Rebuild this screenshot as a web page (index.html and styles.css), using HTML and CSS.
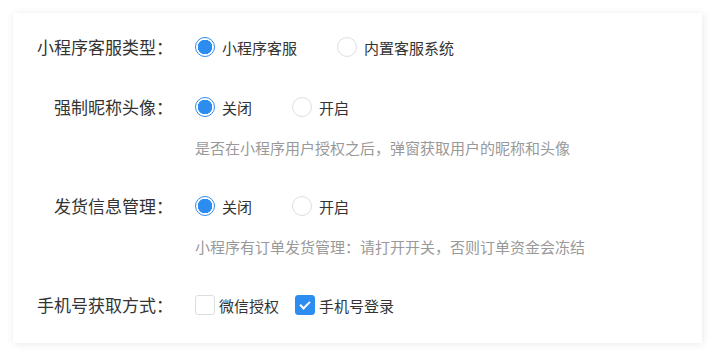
FILE: index.html
```html
<!DOCTYPE html>
<html lang="zh-CN">
<head>
    <meta charset="UTF-8">
    <meta name="viewport" content="width=device-width, initial-scale=1.0">
    <title>小程序设置</title>
    <link rel="stylesheet" href="styles.css">
</head>
<body>
    <div class="setting-card">
        <div class="form-item">
            <label class="form-label">小程序客服类型：</label>
            <div class="form-content">
                <div class="radio-group">
                    <span class="radio checked"><span class="radio-inner"></span>小程序客服</span>
                    <span class="radio"><span class="radio-inner"></span>内置客服系统</span>
                </div>
            </div>
        </div>

        <div class="form-item">
            <label class="form-label">强制昵称头像：</label>
            <div class="form-content">
                <div class="radio-group">
                    <span class="radio checked"><span class="radio-inner"></span>关闭</span>
                    <span class="radio"><span class="radio-inner"></span>开启</span>
                </div>
                <div class="help">是否在小程序用户授权之后，弹窗获取用户的昵称和头像</div>
            </div>
        </div>

        <div class="form-item">
            <label class="form-label">发货信息管理：</label>
            <div class="form-content">
                <div class="radio-group">
                    <span class="radio checked"><span class="radio-inner"></span>关闭</span>
                    <span class="radio"><span class="radio-inner"></span>开启</span>
                </div>
                <div class="help">小程序有订单发货管理：请打开开关，否则订单资金会冻结</div>
            </div>
        </div>

        <div class="form-item">
            <label class="form-label">手机号获取方式：</label>
            <div class="form-content">
                <div class="checkbox-group">
                    <span class="checkbox"><span class="checkbox-inner"></span>微信授权</span>
                    <span class="checkbox checked"><span class="checkbox-inner"></span>手机号登录</span>
                </div>
            </div>
        </div>
    </div>
</body>
</html>
```

FILE: styles.css
```css
body {
    margin: 0;
    padding: 13px;
    background: #fff;
    font-family: "Noto Sans CJK SC", "Noto Sans", sans-serif;
    color: #333;
}
.setting-card {
    background: white;
    padding: 17px 0 21px;
    box-shadow: 1px 1px 8px rgba(0,0,0,0.09);
}
.form-item {
    display: flex;
    margin-bottom: 26px;
}
.form-item:last-child {
    margin-bottom: 0;
}
.form-label {
    width: 160px;
    margin-right: 22px;
    text-align: right;
    font-size: 17px;
    line-height: 34px;
    color: #333;
}
.radio-group,
.checkbox-group {
    display: flex;
    align-items: center;
    height: 34px;
    font-size: 15px;
}
.radio {
    display: flex;
    align-items: center;
    margin-right: 40px;
}
.radio-inner {
    box-sizing: border-box;
    width: 20px;
    height: 20px;
    border: 1px solid #dcdee2;
    border-radius: 50%;
    margin-right: 7px;
    background: white;
}
.radio.checked .radio-inner {
    border: 1.5px solid #2d8cf0;
    background: radial-gradient(circle, #2d8cf0 0 7px, #fff 7.5px);
}
.checkbox {
    display: flex;
    align-items: center;
    margin-right: 16px;
}
.checkbox-inner {
    box-sizing: border-box;
    width: 20px;
    height: 20px;
    border: 1px solid #dcdee2;
    border-radius: 3px;
    margin-right: 4px;
    position: relative;
}
.checkbox.checked .checkbox-inner {
    background: #2d8cf0;
    border-color: #2d8cf0;
}
.checkbox.checked .checkbox-inner::after {
    content: "";
    position: absolute;
    left: 6px;
    top: 3px;
    width: 4px;
    height: 8px;
    border: 2px solid white;
    border-top: 0;
    border-left: 0;
    transform: rotate(45deg);
}
.help {
    margin-top: 12px;
    margin-bottom: 3px;
    font-size: 15px;
    line-height: 24px;
    color: #999;
}
```
